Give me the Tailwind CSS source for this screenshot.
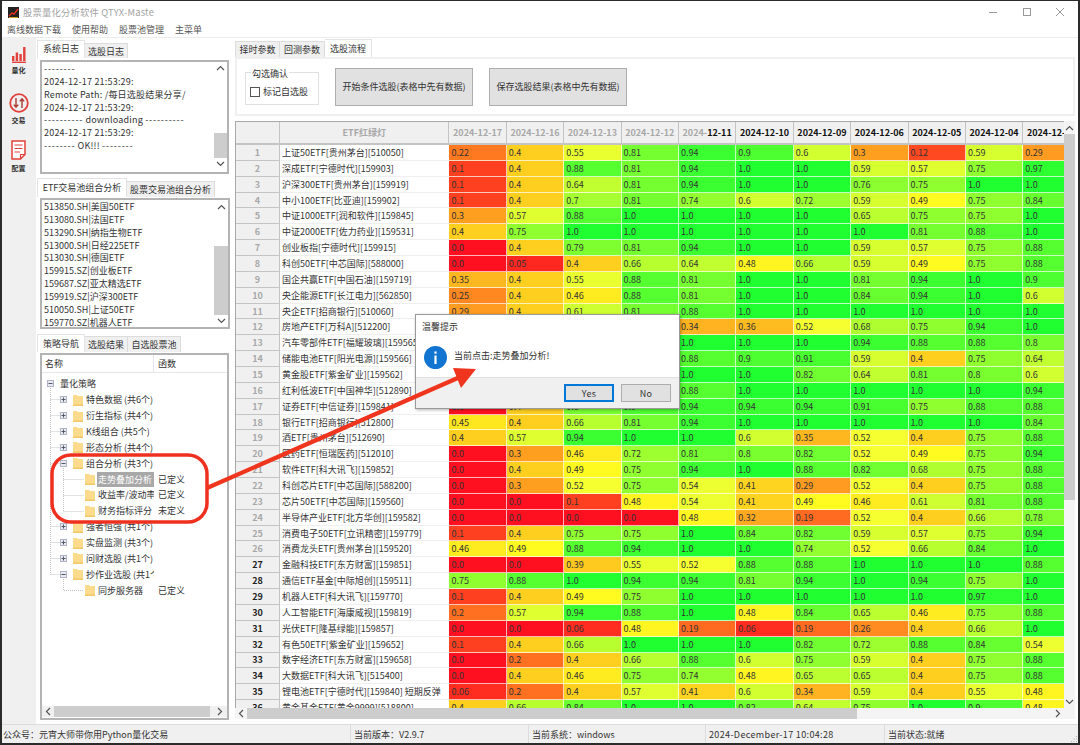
<!DOCTYPE html>
<html lang="zh">
<head>
  <meta charset="UTF-8" />
  <title>股票量化分析软件 QTYX-Master</title>
  <script src="https://cdn.jsdelivr.net/npm/@tailwindcss/browser@4"></script>
</head>
<body class="bg-[#2b2b2b]">
  <div class="relative w-[1080px] h-[745px] overflow-hidden bg-[#2b2b2b] pt-[1px] pl-[2px] pr-[2px] pb-[2px] font-['Noto_Sans_CJK_SC',sans-serif] text-[9px] leading-[13px] text-[#333]">
    <div class="flex flex-col h-full bg-white">

      <!-- Title bar -->
      <div class="flex items-center h-[22px] shrink-0 pl-[6px]">
        <svg class="w-[11px] h-[11px]" viewBox="0 0 11 11"><rect width="11" height="11" fill="#222"/><path d="M1 9 L4 6 L6 7 L10 2" stroke="#e53020" stroke-width="1.4" fill="none"/><path d="M1 10.5H10" stroke="#d9a020"/></svg>
        <span class="ml-[4px] text-[#a3a3a3] text-[9.3px] tracking-[0.2px]">股票量化分析软件 QTYX-Maste</span>
        <div class="ml-auto flex items-center text-[#8c8c8c]">
          <div class="w-[34px] flex justify-center"><svg class="w-[10px] h-[10px]" viewBox="0 0 10 10"><path d="M1 5.5H9" stroke="#999"/></svg></div>
          <div class="w-[34px] flex justify-center"><svg class="w-[10px] h-[10px]" viewBox="0 0 10 10"><rect x="1.5" y="1.5" width="7" height="7" fill="none" stroke="#999"/></svg></div>
          <div class="w-[34px] pr-[2px] flex justify-center"><svg class="w-[10px] h-[10px]" viewBox="0 0 10 10"><path d="M1 1L9 9M9 1L1 9" stroke="#999"/></svg></div>
        </div>
      </div>

      <!-- Menu -->
      <div class="flex items-start h-[15px] shrink-0 pl-[5px] gap-[11px] text-[#555] border-b border-[#ececec]">
        <span>离线数据下载</span><span>使用帮助</span><span>股票池管理</span><span>主菜单</span>
      </div>

      <!-- Main -->
      <div class="flex flex-1 min-h-0">

        <!-- Icon strip -->
        <div class="w-[34px] shrink-0 bg-[#f0f0f0] flex flex-col items-center font-bold text-[7px] leading-[10px] pr-[1px]">
          <svg class="mt-[9px] w-[14px] h-[16px]" viewBox="0 0 14 16"><g fill="#e2403a"><rect x="0" y="9" width="2.4" height="5"/><rect x="3.7" y="5.5" width="2.4" height="8.5"/><rect x="7.4" y="7" width="2.4" height="7"/><rect x="11.1" y="0" width="2.4" height="14"/><rect x="0" y="14.6" width="14" height="1.4"/></g></svg>
          <span class="mt-[2px]">量化</span>
          <svg class="mt-[18px] w-[20px] h-[20px]" viewBox="0 0 20 20"><circle cx="10" cy="10" r="8.8" fill="none" stroke="#e2403a" stroke-width="1.8"/><path d="M7 5V14M4.8 11.6L7 14.2L9.2 11.6" fill="none" stroke="#a83a30" stroke-width="1.4"/><path d="M13 15V6M10.8 8.4L13 5.8L15.2 8.4" fill="none" stroke="#a83a30" stroke-width="1.4"/></svg>
          <span class="mt-[2px]">交易</span>
          <svg class="mt-[15px] w-[15px] h-[20px]" viewBox="0 0 15 20"><path d="M1 1H14V14.5L9.5 19H1Z" fill="#fff" stroke="#e2403a" stroke-width="1.5"/><path d="M9.5 19V14.5H14" fill="none" stroke="#e2403a" stroke-width="1.2"/><path d="M3.5 5H11.5M3.5 8.5H11.5M3.5 12H9" stroke="#e2403a" stroke-width="1.2"/></svg>
          <span class="mt-[3px]">配置</span>
        </div>

        <!-- Left column -->
        <div class="w-[196px] shrink-0 flex flex-col pl-[1px]">
          <div class="mt-[2px] h-[18px] flex items-end shrink-0">
            <div class="w-[48px] h-[18px] pb-[2px] bg-white border-t border-x border-[#e3e3e3] flex items-center justify-center">系统日志</div>
            <div class="w-[43px] h-[15px] bg-[#f0f0f0] border-t border-r border-[#dcdcdc] flex items-center justify-center">选股日志</div>
          </div>

          <!-- Log -->
          <div class="ml-[3px] mt-[2px] w-[189px] h-[114px] shrink-0 flex border-2 border-[#b4b4b4] bg-white">
            <div class="flex-1 pl-[2px] pt-[1px] leading-[12.85px] tracking-[0.2px] whitespace-nowrap overflow-hidden">
              <div class="tracking-[0.8px]">--------</div>
              <div>2024-12-17 21:53:29:</div>
              <div>Remote Path: /每日选股结果分享/</div>
              <div>2024-12-17 21:53:29:</div>
              <div><span class="tracking-[0.8px]">----------</span> downloading <span class="tracking-[0.8px]">----------</span></div>
              <div>2024-12-17 21:53:29:</div>
              <div><span class="tracking-[0.8px]">--------</span> OK!!! <span class="tracking-[0.8px]">--------</span></div>
            </div>
            <div class="w-[13px] shrink-0 flex flex-col items-center bg-white">
              <svg class="mt-[3px] w-[9px] h-[6px] shrink-0" viewBox="0 0 9 6"><path d="M1 5L4.5 1.5L8 5" fill="none" stroke="#555" stroke-width="1.2"/></svg>
              <div class="mt-[62px] w-full h-[25px] bg-[#cdcdcd]"></div>
              <svg class="mt-[3px] w-[9px] h-[6px] shrink-0" viewBox="0 0 9 6"><path d="M1 1L4.5 4.5L8 1" fill="none" stroke="#555" stroke-width="1.2"/></svg>
            </div>
          </div>

          <div class="mt-[4px] h-[19px] flex items-end shrink-0">
            <div class="w-[90px] h-[19px] pb-[2px] bg-white border-t border-x border-[#e3e3e3] flex items-center justify-center">ETF交易池组合分析</div>
            <div class="w-[88px] h-[16px] bg-[#f0f0f0] border-t border-r border-[#dcdcdc] flex items-center justify-center">股票交易池组合分析</div>
          </div>

          <!-- ETF pool list -->
          <div class="ml-[3px] mt-[1px] w-[190px] h-[131px] shrink-0 flex border-2 border-[#b4b4b4] bg-white">
            <div id="pool" class="flex-1 pl-[2px] pt-[1px] leading-[12.85px] whitespace-nowrap overflow-hidden"></div>
            <div class="w-[14px] shrink-0 flex flex-col items-center bg-white">
              <svg class="mt-[4px] w-[9px] h-[6px] shrink-0" viewBox="0 0 9 6"><path d="M1 5L4.5 1.5L8 5" fill="none" stroke="#555" stroke-width="1.2"/></svg>
              <div class="mt-[36px] w-full h-[69px] bg-[#cdcdcd]"></div>
              <svg class="mt-[3px] w-[9px] h-[6px] shrink-0" viewBox="0 0 9 6"><path d="M1 1L4.5 4.5L8 1" fill="none" stroke="#555" stroke-width="1.2"/></svg>
            </div>
          </div>

          <div class="mt-[5px] h-[18px] flex items-end shrink-0">
            <div class="w-[48px] h-[18px] pb-[1px] bg-white border-t border-x border-[#e3e3e3] flex items-center justify-center">策略导航</div>
            <div class="w-[43px] h-[16px] bg-[#f0f0f0] border-t border-r border-[#dcdcdc] flex items-center justify-center">选股结果</div>
            <div class="w-[53px] h-[16px] bg-[#f0f0f0] border-t border-r border-[#dcdcdc] flex items-center justify-center">自选股票池</div>
          </div>

          <!-- Strategy tree -->
          <div class="relative ml-[3px] mt-[1px] w-[189px] h-[367px] shrink-0 flex flex-col border-2 border-[#b4b4b4] bg-white">
            <div class="flex h-[18px] shrink-0 items-center border-b border-[#e6e6e6]">
              <div class="w-[112px] h-full pl-[3px] flex items-center border-r border-[#e6e6e6]">名称</div>
              <div class="pl-[4px]">函数</div>
            </div>
            <div id="tree" class="flex-1 min-h-0 pt-[3px]"></div>
            <div class="flex items-center h-[11px] shrink-0 mb-[1px] bg-[#f0f0f0]">
              <svg class="ml-[3px] w-[6px] h-[9px] shrink-0" viewBox="0 0 6 9"><path d="M5 1L1.5 4.5L5 8" fill="none" stroke="#555" stroke-width="1.2"/></svg>
              <div class="ml-[3px] w-[156px] h-full bg-[#cdcdcd]"></div>
              <svg class="ml-[7px] w-[6px] h-[9px] shrink-0" viewBox="0 0 6 9"><path d="M1 1L4.5 4.5L1 8" fill="none" stroke="#555" stroke-width="1.2"/></svg>
            </div>
            <!-- tree connectors -->
            <svg class="absolute left-0 top-0 w-[185px] h-[300px] pointer-events-none" viewBox="42 355 185 300">
              <g stroke="#c4c4c4" stroke-dasharray="1 1" fill="none">
                <path d="M50.5 388V574.5M50.5 399.5H60M50.5 415.5H60M50.5 431.5H60M50.5 447.5H60M50.5 463.5H60M50.5 526.5H60M50.5 542.5H60M50.5 558.5H60M50.5 574.5H60"/>
                <path d="M63.5 468V511.5M63.5 479.5H84M63.5 495.5H84M63.5 511.5H84M63.5 579V590.5H84"/>
              </g>
            </svg>
          </div>
        </div>

        <!-- Right column -->
        <div class="flex-1 min-w-0 flex flex-col pl-[3px] pr-[3px]">
          <div class="mt-[1px] h-[18px] flex items-end shrink-0">
            <div class="w-[45px] h-[16px] bg-[#f0f0f0] border-t border-x border-[#dcdcdc] flex items-center justify-center">择时参数</div>
            <div class="w-[45px] h-[16px] bg-[#f0f0f0] border-t border-r border-[#dcdcdc] flex items-center justify-center">回测参数</div>
            <div class="w-[47px] h-[18px] pb-[1px] bg-white border-t border-r border-[#e3e3e3] flex items-center justify-center">选股流程</div>
          </div>

          <!-- Selection controls -->
          <div class="h-[59px] shrink-0 flex items-center border-2 border-[#f0f0f0] bg-white pl-[8px]">
            <div class="relative w-[74px] h-[33px] mt-[3px] border border-[#e0e0e0] flex items-center pl-[4px] pt-[7px]">
              <span class="absolute left-[5px] -top-[6px] bg-white px-[1px]">勾选确认</span>
              <span class="w-[10px] h-[10px] border border-[#555] bg-white"></span>
              <span class="ml-[3px]">标记自选股</span>
            </div>
            <div class="ml-[16px] w-[138px] h-[38px] border border-[#adadad] bg-[#e1e1e1] flex items-center justify-center">开始条件选股(表格中先有数据)</div>
            <div class="ml-[16px] w-[138px] h-[38px] border border-[#adadad] bg-[#e1e1e1] flex items-center justify-center">保存选股结果(表格中先有数据)</div>
          </div>

          <!-- Table -->
          <div class="mt-[5px] h-[598px] shrink-0 flex flex-col">
            <div class="flex flex-1 min-h-0">
              <div class="w-[829px] shrink-0 overflow-hidden border-t border-l border-[#a8a8a8]">
                <div id="head" class="flex w-[846px] h-[23px] font-bold text-[#a8a8a8] border-b-2 border-[#c4c4c4] bg-[#f0f0f0]"></div>
                <div id="rows" class="w-[846px]"></div>
              </div>
              <div class="w-[11px] shrink-0 flex flex-col items-center bg-[#f4f4f4]">
                <svg class="mt-[4px] w-[9px] h-[6px] shrink-0" viewBox="0 0 9 6"><path d="M1 5L4.5 1.5L8 5" fill="none" stroke="#555" stroke-width="1.2"/></svg>
                <div class="mt-[3px] w-full h-[366px] bg-[#cdcdcd]"></div>
                <svg class="mt-auto mb-[3px] w-[9px] h-[6px] shrink-0" viewBox="0 0 9 6"><path d="M1 1L4.5 4.5L8 1" fill="none" stroke="#555" stroke-width="1.2"/></svg>
              </div>
            </div>
            <div class="flex items-center h-[11px] shrink-0 bg-[#f4f4f4]">
              <svg class="ml-[3px] w-[6px] h-[9px] shrink-0" viewBox="0 0 6 9"><path d="M5 1L1.5 4.5L5 8" fill="none" stroke="#555" stroke-width="1.2"/></svg>
              <div class="ml-[3px] w-[610px] h-full bg-[#cdcdcd]"></div>
              <svg class="ml-auto mr-[14px] w-[6px] h-[9px] shrink-0" viewBox="0 0 6 9"><path d="M1 1L4.5 4.5L1 8" fill="none" stroke="#555" stroke-width="1.2"/></svg>
            </div>
          </div>
        </div>
      </div>

      <!-- Status bar -->
      <div class="flex items-center h-[19px] shrink-0 bg-[#f0f0f0] border-t border-[#dcdcdc]">
        <div class="w-[349px] h-full pl-[1px] pt-[1px] flex items-center border-r border-[#dcdcdc]">公众号：元宵大师带你用Python量化交易</div>
        <div class="w-[178px] h-full pl-[3px] pt-[1px] flex items-center border-r border-[#dcdcdc]">当前版本：V2.9.7</div>
        <div class="w-[177px] h-full pl-[3px] pt-[1px] flex items-center border-r border-[#dcdcdc]">当前系统：windows</div>
        <div class="w-[179px] h-full pl-[3px] pt-[1px] tracking-[0.35px] flex items-center border-r border-[#dcdcdc]">2024-December-17 10:04:28</div>
        <div class="flex-1 h-full pl-[3px] pt-[1px] flex items-center justify-between">
          <span>当前状态:就绪</span>
          <svg class="self-end w-[8px] h-[8px]" viewBox="0 0 8 8"><g fill="#b0b0b0"><rect x="6" y="6" width="1" height="1"/><rect x="3.5" y="6" width="1" height="1"/><rect x="1" y="6" width="1" height="1"/><rect x="6" y="3.5" width="1" height="1"/><rect x="3.5" y="3.5" width="1" height="1"/><rect x="6" y="1" width="1" height="1"/></g></svg>
        </div>
      </div>
    </div>

    <!-- Message box -->
    <div class="absolute left-[415px] top-[314px] w-[265px] h-[95px] flex flex-col bg-white border border-[#9a9a9a] shadow-[1px_1px_3px_rgba(0,0,0,0.3)]">
      <div class="h-[23px] shrink-0 pl-[6px] flex items-center">温馨提示</div>
      <div class="h-[39px] shrink-0 pl-[8px] flex items-center">
        <svg class="w-[23px] h-[23px] shrink-0" viewBox="0 0 23 23"><circle cx="11.5" cy="11.5" r="11.5" fill="#1074d0"/><rect x="10.4" y="9.5" width="2.2" height="8.5" fill="#fff"/><rect x="10.4" y="5.5" width="2.2" height="2.2" fill="#fff"/></svg>
        <span class="ml-[7px] -mt-[5px]">当前点击:走势叠加分析!</span>
      </div>
      <div class="flex-1 flex items-start justify-end gap-[7px] pt-[6px] pr-[8px] bg-[#f0f0f0] border-t border-[#dfdfdf]">
        <div class="w-[50px] h-[18px] border-2 border-[#0078d7] bg-[#e1e1e1] flex items-center justify-center tracking-[0.3px]">Yes</div>
        <div class="w-[50px] h-[18px] border border-[#adadad] bg-[#e1e1e1] flex items-center justify-center tracking-[0.3px]">No</div>
      </div>
    </div>

    <!-- Hand-drawn annotation -->
    <svg class="absolute left-0 top-0 w-[1080px] h-[745px] pointer-events-none" viewBox="0 0 1080 745">
      <rect x="52" y="455" width="155" height="67" rx="19" fill="none" stroke="#f0301f" stroke-width="3.5"/>
      <path d="M207 488L460 377" stroke="#f0351f" stroke-width="4.2"/>
      <path d="M476 369L453 368L461 388Z" fill="#f0351f"/>
    </svg>
  </div>

  <script>
    const pool = ['513850.SH|美国50ETF','513080.SH|法国ETF','513290.SH|纳指生物ETF','513000.SH|日经225ETF','513030.SH|德国ETF','159915.SZ|创业板ETF','159687.SZ|亚太精选ETF','159919.SZ|沪深300ETF','510050.SH|上证50ETF','159770.SZ|机器人ETF'];
    document.getElementById('pool').innerHTML = pool.map(t => `<div>${t}</div>`).join('');

    // level, open state, name, function column
    const tree = [
      [0, '-', '量化策略', ''],
      [1, '+', '特色数据 (共6个)', ''],
      [1, '+', '衍生指标 (共4个)', ''],
      [1, '+', 'K线组合 (共5个)', ''],
      [1, '+', '形态分析 (共4个)', ''],
      [1, '-', '组合分析 (共3个)', ''],
      [2, '', '走势叠加分析', '已定义'],
      [2, '', '收益率/波动率', '已定义'],
      [2, '', '财务指标评分', '未定义'],
      [1, '+', '强者恒强 (共1个)', ''],
      [1, '+', '实盘监测 (共3个)', ''],
      [1, '+', '问财选股 (共1个)', ''],
      [1, '-', '抄作业选股 (共1个)', ''],
      [2, '', '同步服务器', '已定义'],
    ];
    const folder = `<svg class="w-[10px] h-[12px] shrink-0" viewBox="0 0 10 12"><path d="M0 1H4L5 2H10V12H0Z" fill="#fcdc8c"/><path d="M0 10.5H10V12H0Z" fill="#f2c768"/></svg>`;
    function expander(state) {
      const plus = state === '+' ? '<path d="M3.5 1.5V5.5" stroke="#556"/>' : '';
      return `<svg class="w-[7px] h-[7px] shrink-0" viewBox="0 0 7 7"><rect x=".5" y=".5" width="6" height="6" fill="#e8eaf2" stroke="#b0b4c6"/><path d="M1.5 3.5H5.5" stroke="#556"/>${plus}</svg>`;
    }
    document.getElementById('tree').innerHTML = tree.map(([level, state, name, fn]) => {
      let left = '';
      if (level === 0) left = `<div class="ml-[5px] flex items-center">${expander(state)}</div><span class="ml-[6px]">${name}</span>`;
      if (level === 1) left = `<div class="ml-[18px] flex items-center gap-[6px]">${expander(state)}${folder}</div><span class="ml-[3px]">${name}</span>`;
      if (level === 2) {
        const sel = name === '走势叠加分析' ? 'bg-[#a8a8a8] text-white' : '';
        left = `<div class="ml-[43px]">${folder}</div><div class="ml-[2px] pl-[1px] h-[15px] flex-1 flex items-center ${sel}">${name}</div>`;
      }
      return `<div class="flex items-center h-[15.87px]"><div class="w-[112px] h-full shrink-0 flex items-center overflow-hidden whitespace-nowrap">${left}</div><span class="ml-[4px]">${fn}</span></div>`;
    }).join('');

    const dates = ['12-17','12-16','12-13','12-12','12-11','12-10','12-09','12-06','12-05','12-04','12-03'];
    document.getElementById('head').innerHTML =
      `<div class="w-[44px] shrink-0 border-r border-[#c4c4c4]"></div><div class="w-[169.4px] shrink-0 flex items-center justify-center border-r border-[#c4c4c4]">ETF红绿灯</div>` +
      dates.map((d, i) => {
        let label = `2024-${d}`;
        if (i === 4) label = `2024-<span class="text-[#111]">${d}</span>`;
        if (i > 4) label = `<span class="text-[#111]">2024-${d}</span>`;
        return `<div class="w-[57.4px] shrink-0 flex items-center justify-center whitespace-nowrap border-r border-[#c4c4c4]">${label}</div>`;
      }).join('');

    const rows = [
      ['上证50ETF[贵州茅台][510050]',[.22,.4,.55,.81,.94,.9,.6,.3,.12,.59,.29]],
      ['深成ETF[宁德时代][159903]',[.1,.4,.88,.81,.94,1,1,.59,.57,.75,.97]],
      ['沪深300ETF[贵州茅台][159919]',[.1,.4,.64,.81,.94,1,1,.76,.75,1,1]],
      ['中小100ETF[比亚迪][159902]',[.1,.4,.7,.81,.74,.6,.72,.59,.49,.75,.84]],
      ['中证1000ETF[润和软件][159845]',[.3,.57,.88,1,1,1,1,.65,.75,.75,1]],
      ['中证2000ETF[佐力药业][159531]',[.4,.75,1,1,1,1,1,1,.81,.88,1]],
      ['创业板指[宁德时代][159915]',[0,.4,.79,.81,.94,1,1,.59,.57,.75,.88]],
      ['科创50ETF[中芯国际][588000]',[0,.05,.4,.66,.64,.48,.66,.59,.49,.75,.88]],
      ['国企共赢ETF[中国石油][159719]',[.35,.4,.55,.88,.81,1,1,.81,.94,1,.9]],
      ['央企能源ETF[长江电力][562850]',[.25,.4,.46,.88,.81,1,1,.84,.94,1,.6]],
      ['央企ETF[招商银行][510060]',[.29,.4,.61,.81,.88,1,1,1,1,1,1]],
      ['房地产ETF[万科A][512200]',[.2,.4,.5,.7,.34,.36,.52,.68,.75,.94,1]],
      ['汽车零部件ETF[福耀玻璃][159565]',[.1,.4,.8,.9,1,1,1,.94,.88,.88,.8]],
      ['储能电池ETF[阳光电源][159566]',[.1,.4,.7,.8,.88,.9,.91,.59,.4,.75,.64]],
      ['黄金股ETF[紫金矿业][159562]',[.4,.6,.8,.9,1,1,.82,.64,.81,.8,.6]],
      ['红利低波ETF[中国神华][512890]',[.4,.6,.8,.9,.88,1,1,1,1,1,.94]],
      ['证券ETF[中信证券][159841]',[0,.4,.8,.9,.94,.94,.94,.91,.75,.88,.88]],
      ['银行ETF[招商银行][512800]',[.45,.4,.66,.81,.94,1,1,1,1,1,.84]],
      ['酒ETF[贵州茅台][512690]',[.4,.57,.94,1,1,.6,.35,.52,.4,.75,.88]],
      ['医药ETF[恒瑞医药][512010]',[0,.3,.46,.72,.81,.8,.82,.52,.49,.75,.94]],
      ['软件ETF[科大讯飞][159852]',[0,.4,.49,.75,.94,1,.88,.82,.68,.75,.88]],
      ['科创芯片ETF[中芯国际][588200]',[0,.3,.52,.75,.54,.41,.29,.52,.4,.75,.88]],
      ['芯片50ETF[中芯国际][159560]',[0,0,.1,.48,.54,.41,.49,.46,.61,.81,.88]],
      ['半导体产业ETF[北方华创][159582]',[0,0,0,0,.48,.32,.19,.52,.4,.66,.78]],
      ['消费电子50ETF[立讯精密][159779]',[.1,.4,.75,.75,1,.84,.82,.59,.57,.75,.94]],
      ['消费龙头ETF[贵州茅台][159520]',[.46,.49,.88,.94,1,1,.74,.52,.66,.84,1]],
      ['金融科技ETF[东方财富][159851]',[0,0,.39,.55,.52,.88,.88,1,1,1,.88]],
      ['通信ETF基金[中际旭创][159511]',[.75,.88,1,.94,.94,.81,.94,1,.94,.75,1]],
      ['机器人ETF[科大讯飞][159770]',[.1,.4,.49,.75,1,1,1,1,1,.97,1]],
      ['人工智能ETF[海康威视][159819]',[.2,.57,.94,.88,1,.48,.84,.65,.46,.75,.88]],
      ['光伏ETF[隆基绿能][159857]',[0,0,.06,.48,.19,.06,.19,.26,.4,.66,1]],
      ['有色50ETF[紫金矿业][159652]',[.1,.4,.66,1,1,1,.82,.72,.88,.84,.54]],
      ['数字经济ETF[东方财富][159658]',[0,.2,.4,.66,.88,.6,.75,.59,.4,.75,.88]],
      ['大数据ETF[科大讯飞][515400]',[0,.4,.46,.75,.74,.48,.65,.65,.4,.75,.88]],
      ['锂电池ETF[宁德时代][159840] 短期反弹',[.06,.2,.4,.57,.41,.6,.34,.59,.4,.55,.48]],
      ['黄金基金ETF[黄金9999][518800]',[.4,.66,.84,1,1,.82,.64,.75,1,.9,.48]],
    ];

    // red at 0, yellow at 0.5, green at 1
    function heat(v) {
      if (v < 0.5) return `rgb(255,${Math.round(16 + 478 * v)},32)`;
      return `rgb(${Math.round(255 - 446 * (v - 0.5))},255,48)`;
    }
    function fmt(v) {
      if (v === 0) return '0.0';
      if (v === 1) return '1.0';
      return String(v);
    }
    document.getElementById('rows').innerHTML = rows.map(([name, vals], i) => {
      const numCls = i < 26 ? 'text-[#a8a8a8]' : 'text-[#222]';
      const cells = vals.map(v => `<div class="w-[57.4px] shrink-0 pl-[2px] flex items-center border-r border-b border-white/70" style="background:${heat(v)}">${fmt(v)}</div>`).join('');
      return `<div class="flex h-[15.87px]">
        <div class="w-[44px] shrink-0 flex items-center justify-center font-bold bg-[#f0f0f0] border-r border-b border-[#c4c4c4] ${numCls}">${i + 1}</div>
        <div class="w-[169.4px] shrink-0 pl-[2px] flex items-center whitespace-nowrap overflow-hidden border-b border-[#efefef]">${name}</div>
        ${cells}
      </div>`;
    }).join('');
  </script>
</body>
</html>
